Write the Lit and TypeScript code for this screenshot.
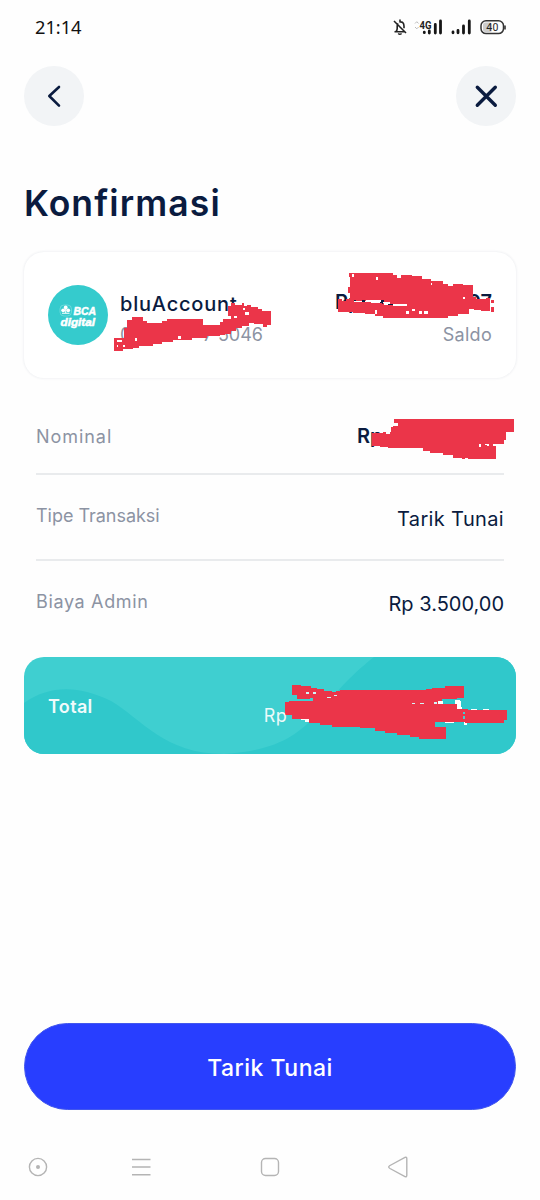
import { LitElement, html, css } from "lit";
import { customElement, property } from "lit/decorators.js";

@customElement("detail-row")
class DetailRow extends LitElement {
  @property() label = "";
  static styles = css`
    :host { display: flex; justify-content: space-between; box-sizing: border-box; }
    .label { color: #8c93a3; font-size: 18px; line-height: 24px; letter-spacing: var(--label-spacing, 0.2px); }
    .value { color: #0a1b3f; font-size: 20px; line-height: 24px; }
  `;
  render() {
    return html`<span class="label">${this.label}</span><span class="value"><slot></slot></span>`;
  }
}

@customElement("app-root")
class AppRoot extends LitElement {
  static styles = css`
    :host { display: block; position: relative; width: 540px; height: 1200px; overflow: hidden; background: #fefefe; font-family: Inter, sans-serif; font-weight: 400; color: #0a1b3f; }
    * { box-sizing: border-box; }
    svg { display: block; }
    .status { display: flex; justify-content: space-between; height: 66px; padding: 15px 34px 0 35px; }
    .clock { font-family: "Noto Sans", sans-serif; font-size: 18.3px; line-height: 24px; letter-spacing: -0.05px; color: #111; }
    .header { display: flex; justify-content: space-between; padding: 0 24px; height: 60px; }
    .round { width: 60px; height: 60px; border: 0; padding: 0; border-radius: 50%; background: #f2f4f6; }
    h1 { margin: 56px 24px 0; font-size: 35.5px; line-height: 44px; font-weight: 600; letter-spacing: 1.1px; height: 71px; }
    .card { display: flex; margin: -1px 24px 0; height: 126px; padding: 33px 24px 0; border-radius: 20px; background: #fff; box-shadow: 0 0 3px rgba(30, 50, 80, 0.11); }
    .logo { width: 60px; height: 60px; }
    .account { margin-left: 12px; width: 143px; }
    .name { font-size: 20px; line-height: 24px; font-weight: 500; letter-spacing: 0.8px; margin-top: 7px; }
    .number { display: flex; justify-content: space-between; margin-top: 7px; font-size: 18px; line-height: 24px; color: #8c93a3; }
    .balance { margin-left: auto; width: 157px; text-align: right; }
    .amount { display: flex; justify-content: space-between; margin-top: 5px; font-size: 20px; line-height: 24px; font-weight: 600; }
    .caption { margin-top: 9px; font-size: 18px; line-height: 24px; letter-spacing: 0.3px; color: #8c93a3; }
    .row { margin: 0 36px; }
    .nominal { height: 97px; padding-top: 47px; border-bottom: 2px solid #e9ebed; --label-spacing: 0.95px; }
    .nominal b { display: block; width: 147px; margin-top: -1px; font-weight: 600; }
    .type { height: 86px; padding-top: 29px; border-bottom: 2px solid #e9ebed; --label-spacing: -0.05px; }
    .fee { height: 96px; padding-top: 29px; --label-spacing: 0.65px; }
    .low { display: block; padding-top: 3px; }
    .type { --label-spacing: -0.03px; }
    .type .low { letter-spacing: 0.35px; }
    .fee .low { padding-top: 2px; }
    .total { display: grid; margin: 0 24px; width: 492px; height: 97px; border-radius: 20px; overflow: hidden; color: #fff; }
    .total > * { grid-area: 1 / 1; }
    .totals { z-index: 1; display: flex; padding: 38px 24px 0; }
    .totals b { font-size: 18px; line-height: 24px; font-weight: 600; letter-spacing: 0.35px; opacity: .93; }
    .currency { margin-left: 171px; padding-top: 9px; font-size: 18px; line-height: 24px; letter-spacing: .5px; opacity: .9; }
    .primary { display: block; margin: 269px 24px 0; width: 492px; height: 87px; border: 1px solid #4257ed; border-radius: 44px; background: #283eff; color: #fff; font: 500 23px/28px Inter, sans-serif; letter-spacing: 0.5px; padding: 2px 0 0; }
    .marks { position: absolute; left: 0; top: 0; pointer-events: none; }
  `;

  render() {
    return html`
      <div class="status">
        <span class="clock">21:14</span>
        <svg width="114" height="24" viewBox="392 15 114 24" fill="none" stroke="#222" stroke-width="1.6">
          <path d="M394.5 31.8h10.5M396 31.5q1.2-1.2 1.2-3v-2.5q0-1.5.8-2.6M399.3 22q4.7-1 4.7 4.2v2M400 19.6v1.8M394 21l12 12M398.2 33.5q1.6 1.5 3.4 0" />
          <path d="M415 23.5l1.8-1.8 1.8 1.8M415 27l1.8 1.8 1.8-1.8" stroke="#bbb" stroke-width="1"/>
          <text x="419.5" y="28.5" font-family="Roboto, sans-serif" font-weight="700" font-size="10" textLength="12" lengthAdjust="spacingAndGlyphs" fill="#222" stroke="none">4G</text>
          <g stroke="#161616" stroke-width="2.8" stroke-linecap="round">
            <path d="M424.3 32.2v.5M429.3 31v2M435.3 24.5v8.5M440.5 21v12M453 32v.8M458 30.4v2.4M463.5 26v7M469.3 21v12"/>
          </g>
          <rect x="481" y="20.8" width="22.5" height="12.8" rx="5" stroke="#333" stroke-width="1.5" />
          <rect x="483" y="22.5" width="9" height="9.5" rx="2.5" fill="#ccc" stroke="none"/>
          <path d="M505 25.5v4" stroke="#333"/>
          <text x="486.3" y="31" font-family="Roboto, sans-serif" font-size="10.5" textLength="12" fill="#222" stroke="none">40</text>
        </svg>
      </div>
      <div class="header">
        <button class="round" aria-label="Kembali"><svg width="60" height="60" fill="none" stroke="#0a1b3f" stroke-width="2.6" stroke-linecap="round" stroke-linejoin="round"><path d="M35 21l-9.7 9 9.7 9.6"/></svg></button>
        <button class="round" aria-label="Tutup"><svg width="60" height="60" fill="none" stroke="#0a1b3f" stroke-width="3.4" stroke-linecap="round"><path d="M21.3 21.3l18 18M39.3 21.3l-18 18"/></svg></button>
      </div>
      <h1>Konfirmasi</h1>
      <section class="card">
        <svg class="logo" viewBox="0 0 60 60">
          <circle cx="30" cy="30" r="30" fill="#35cbcd"/>
          <g fill="#fff"><circle cx="17.7" cy="22.5" r="1.9"/><circle cx="15.2" cy="25.3" r="1.9"/><circle cx="20.2" cy="25.3" r="1.9"/><path d="M17.2 24h1v4h-1zM14 27.8h7.5v1H14z"/></g>
          <rect x="12" y="20" width="11.5" height="11" rx="4" fill="none" stroke="#fff" stroke-width=".5" opacity=".5"/>
          <g fill="#fff" stroke="#fff" stroke-width=".5" font-family="Liberation Sans, sans-serif" font-weight="700" font-style="italic">
            <text x="25.5" y="29.5" font-size="10.5" textLength="22.5" lengthAdjust="spacingAndGlyphs">BCA</text>
            <text x="12.5" y="41" font-size="10" textLength="34.5" lengthAdjust="spacingAndGlyphs">digital</text>
          </g>
        </svg>
        <div class="account">
          <div class="name">bluAccount</div>
          <div class="number"><span>0</span><span>7 5046</span></div>
        </div>
        <div class="balance">
          <div class="amount"><span>Rp 2</span><span>07</span></div>
          <div class="caption">Saldo</div>
        </div>
      </section>
      <detail-row class="row nominal" label="Nominal"><b>Rp</b></detail-row>
      <detail-row class="row type" label="Tipe Transaksi"><span class="low">Tarik Tunai</span></detail-row>
      <detail-row class="row fee" label="Biaya Admin"><span class="low">Rp 3.500,00</span></detail-row>
      <section class="total">
        <svg width="492" height="97">
          <path fill="#3fcfd0" d="M0 0h492v97H0z"/>
          <path fill="#30c8cb" d="M0 46C25 28 55 28 87 44C118 62 140 97 200 97H0zM200 97C292 91 286 50 350 0H492V97z"/>
        </svg>
        <div class="totals"><b>Total</b><span class="currency">Rp</span></div>
      </section>
      <button class="primary">Tarik Tunai</button>
      <svg width="540" height="90" viewBox="0 1110 540 90" fill="none" stroke="#b4b4b4" stroke-width="1.4">
        <circle cx="38" cy="1167" r="8.6"/><circle cx="38" cy="1167" r="2" fill="#b4b4b4" stroke="none"/>
        <path d="M132 1159.5h18.5M132 1167h18.5M132 1174.7h18.5"/>
        <rect x="261.5" y="1158.5" width="17" height="17" rx="4"/>
        <path stroke-linejoin="round" d="M390 1165.5l15-8.2q1.8-.5 1.8 1.4v16.6q0 1.9-1.8 1.4l-15-8.2q-2.6-1.5 0-3z"/>
      </svg>
      ${this.marks()}
    `;
  }

  marks() {
    return html`<svg class="marks" width="540" height="1200" fill="#eb3549">
      <g transform="translate(110 295) scale(.33333)" shape-rendering="crispEdges">
        <path d="M12 129H42V100H51V76H67V65H98V77H112V83H155V77H172V71H279V89H329V81H340V72H363V64H355V33H363V24H375V30H395V25H402V32H410V29H424V37H443V42H457V49H482V89H472V95H460V88H433V84H417V92H396V99H378V108H362V116H345V120H330V122H290V128H245V135H190V140H155V146H130V152H86V158H68V162H38V167H12Z"/>
        <path fill="#fff" d="M398 38h7v6h-7zM406 52h12v9h-12zM373 63h9v7h-9zM205 123h9v8h-9zM74 129h8v8h-8zM22 136h14v4h-14zM20 151h5v5h-5zM38 149h8v7h-8z"/>
      </g>
      <g transform="translate(320 245) scale(.33333)" shape-rendering="crispEdges">
        <path d="M88 84H218V89H232V98H242V89H277V94H306V101H334V109H368V118H384V124H399V116H429V121H458V156H468V161H497V158H511V198H483V195H462V193H446V208H414V213H384V218H190V213H164V208H134V204H98V200H54V163H67V169H77V161H90V144H84V126H90V97H88ZM514 166h7v8h-7zM514 187h7v15h-7z"/>
        <path fill="#fff" d="M102 167h35v-3h45v8h28v6h50v4h-40v-3h-28v-4h-40v-4h-50zM96 86h6v10h-6zM170 95h5v10h-7zM332 115h4v6h-4zM430 157h6v5h-6zM164 196h8v10h-8zM257 198h9v10h-9zM275 191h9v8h-9zM296 198h9v10h-9zM313 198h10v10h-10z"/>
        <path fill="#0a1b3f" d="M180 174l5-10h9l-6 12zM102 165h6v4h-6zM127 166h8v4h-8zM205 176h14v3h-14z"/>
      </g>
      <g transform="translate(340 405) scale(.33333)" shape-rendering="crispEdges">
        <path d="M162 42H522V80H499V105H491V116H458V124H467V163H384V158H376V163H366V158H338V150H309V144H270V137H249V129H145V126H120V123H96V83H128V81H138V87H149V81H154V66H160V63H173V55H162Z"/>
        <path fill="#fff" d="M418 118h4v7h-4zM436 116h12v3h-12zM440 119h6v5h-6z"/>
      </g>
      <g transform="translate(280 675) scale(.33333)" shape-rendering="crispEdges">
        <path fill="#fff" d="M62 131H88V141H75V136H62ZM472 78H490V86H472ZM524 74H541L546 103H532L530 88H524ZM574 102h18v4h-18zM610 102h16v4h-16zM495 138h28v5h-28zM552 142h8v8h-8z"/>
        <path d="M36 30H64V34H77V32H93V38H110V42H133V49H155V52H168V49H180V46H407V45H437V41H455V38H495V33H551V70H530V73H486V77H475V88H532V101H565V105H680V135H672V143H555V140H465V156H499V193H417V186H390V180H350V174H315V167H285V160H240V156H155V150H120V145H88V132H37V121H15V82H28V77H98V72H52V59H36Z"/>
        <path fill="#d2f6f7" d="M79 52h8v5h-8zM98 52h9v5h-9zM142 66h10v4h-10zM162 59h10v4h-10zM397 84h7v4h-7zM421 84h10v4h-10zM462 82h10v4h-10z"/>
        <path fill="#46cccf" d="M550 112h4v6h-4zM550 124h4v8h-4zM90 70h9v7h-9z"/>
      </g>
    </svg>`;
  }
}
